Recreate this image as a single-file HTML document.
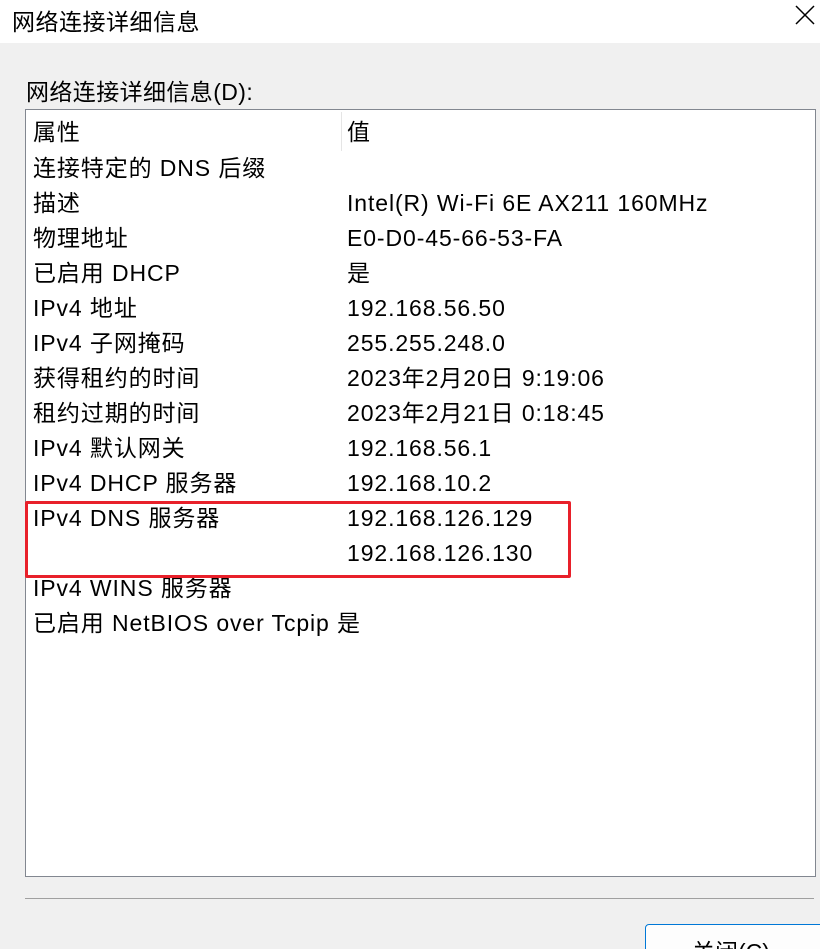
<!DOCTYPE html>
<html><head><meta charset="utf-8"><style>
*{margin:0;padding:0;box-sizing:border-box}
html,body{width:820px;height:949px;overflow:hidden}
body{background:#f0f0f0;position:relative;font-family:"Liberation Sans","Noto Sans CJK SC",sans-serif;color:#000}
.title{position:absolute;left:0;top:0;width:820px;height:43px;background:#fff}
.title span{position:absolute;left:12px;top:3px;font-size:23px;letter-spacing:0.5px}
.x{position:absolute;left:793px;top:3px;width:24px;height:24px}
.lbl{position:absolute;left:26px;top:73px;font-size:23px;letter-spacing:0.4px}
.box{position:absolute;left:25px;top:109px;width:791px;height:768px;background:#fff;border:1px solid #828790}
.div{position:absolute;left:341px;top:112px;width:1px;height:39px;background:#e5e5e5}
.r{position:absolute;font-size:23px;line-height:26px;white-space:nowrap;letter-spacing:0.9px}
.red{position:absolute;left:25px;top:501px;width:546px;height:77px;border:3px solid #e8202a;border-radius:2px}
.sep{position:absolute;left:25px;top:898px;width:789px;height:1px;background:#a0a0a0}
.btn{position:absolute;left:645px;top:924px;width:190px;height:60px;border:1px solid #0078d7;border-radius:4px;background:#fdfdfd;font-size:23px;padding:8px 0 0 46px}
</style></head><body>
<div class="title"><span>网络连接详细信息</span><svg class="x" viewBox="0 0 24 24"><path d="M3 3L21 21M21 3L3 21" stroke="#000" stroke-width="1.5"/></svg></div>
<div class="lbl">网络连接详细信息(D):</div>
<div class="box"></div>
<div class="div"></div>
<div class="r" style="left:33px;top:119px">属性</div><div class="r" style="left:347px;top:119px">值</div>
<div class="r" style="left:33px;top:155px">连接特定的 DNS 后缀</div>
<div class="r" style="left:33px;top:190px">描述</div><div class="r" style="left:347px;top:190px">Intel(R) Wi-Fi 6E AX211 160MHz</div>
<div class="r" style="left:33px;top:225px">物理地址</div><div class="r" style="left:347px;top:225px">E0-D0-45-66-53-FA</div>
<div class="r" style="left:33px;top:260px">已启用 DHCP</div><div class="r" style="left:347px;top:260px">是</div>
<div class="r" style="left:33px;top:295px">IPv4 地址</div><div class="r" style="left:347px;top:295px">192.168.56.50</div>
<div class="r" style="left:33px;top:330px">IPv4 子网掩码</div><div class="r" style="left:347px;top:330px">255.255.248.0</div>
<div class="r" style="left:33px;top:365px">获得租约的时间</div><div class="r" style="left:347px;top:365px">2023年2月20日 9:19:06</div>
<div class="r" style="left:33px;top:400px">租约过期的时间</div><div class="r" style="left:347px;top:400px">2023年2月21日 0:18:45</div>
<div class="r" style="left:33px;top:435px">IPv4 默认网关</div><div class="r" style="left:347px;top:435px">192.168.56.1</div>
<div class="r" style="left:33px;top:470px">IPv4 DHCP 服务器</div><div class="r" style="left:347px;top:470px">192.168.10.2</div>
<div class="r" style="left:33px;top:505px">IPv4 DNS 服务器</div><div class="r" style="left:347px;top:505px">192.168.126.129</div>
<div class="r" style="left:347px;top:540px">192.168.126.130</div>
<div class="r" style="left:33px;top:575px">IPv4 WINS 服务器</div>
<div class="r" style="left:33px;top:610px">已启用 NetBIOS over Tcpip 是</div>
<div class="red"></div>
<div class="sep"></div>
<div class="btn">关闭(C)</div>
</body></html>
